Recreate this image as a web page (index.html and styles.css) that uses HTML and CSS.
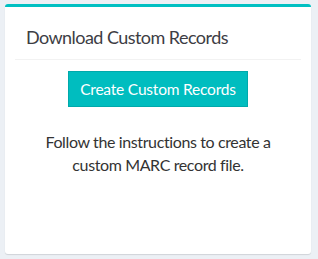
FILE: index.html
```html
<!DOCTYPE html>
<html>
<head>
<meta charset="utf-8">
<link rel="stylesheet" href="styles.css">
</head>
<body>
<div class="box">
  <div class="box-header">
    <h3 class="box-title">Download Custom Records</h3>
  </div>
  <div class="box-body">
    <a class="btn">Create Custom Records</a>
    <p class="desc">Follow the instructions to create a custom MARC record file.</p>
  </div>
</div>
</body>
</html>
```
FILE: styles.css
```css
html, body {
  margin: 0;
  height: 100%;
}
body {
  background: #ecf0f5;
  padding: 4px 7px 5px 5px;
  box-sizing: border-box;
  font-family: Lato, "Liberation Sans", sans-serif;
}
.box {
  background: #fff;
  border-top: 3px solid #00c0c2;
  border-radius: 3px;
  box-shadow: 0 1px 1px rgba(0,0,0,0.12);
  height: 100%;
  box-sizing: border-box;
}
.box-header {
  margin: 0 10px;
  padding: 19px 11px 11px;
  border-bottom: 1px solid #f2f2f2;
}
.box-title {
  margin: 0;
  font-size: 18px;
  font-weight: 400;
  line-height: 22px;
  letter-spacing: -0.55px;
  color: #3d3d44;
}
.box-body {
  padding: 11px 10px 10px;
  display: flex;
  flex-direction: column;
  align-items: center;
}
.btn {
  display: block;
  width: 180px;
  box-sizing: border-box;
  text-align: center;
  background: #00bdbf;
  border: 1px solid #00a9ab;
  color: #fff;
  font-size: 15.5px;
  letter-spacing: -0.2px;
  line-height: 22px;
  padding: 6px 0;
}
.desc {
  margin: 24px 0 0;
  width: 250px;
  text-align: center;
  font-size: 16px;
  letter-spacing: -0.38px;
  line-height: 22.86px;
  color: #333;
}
```
